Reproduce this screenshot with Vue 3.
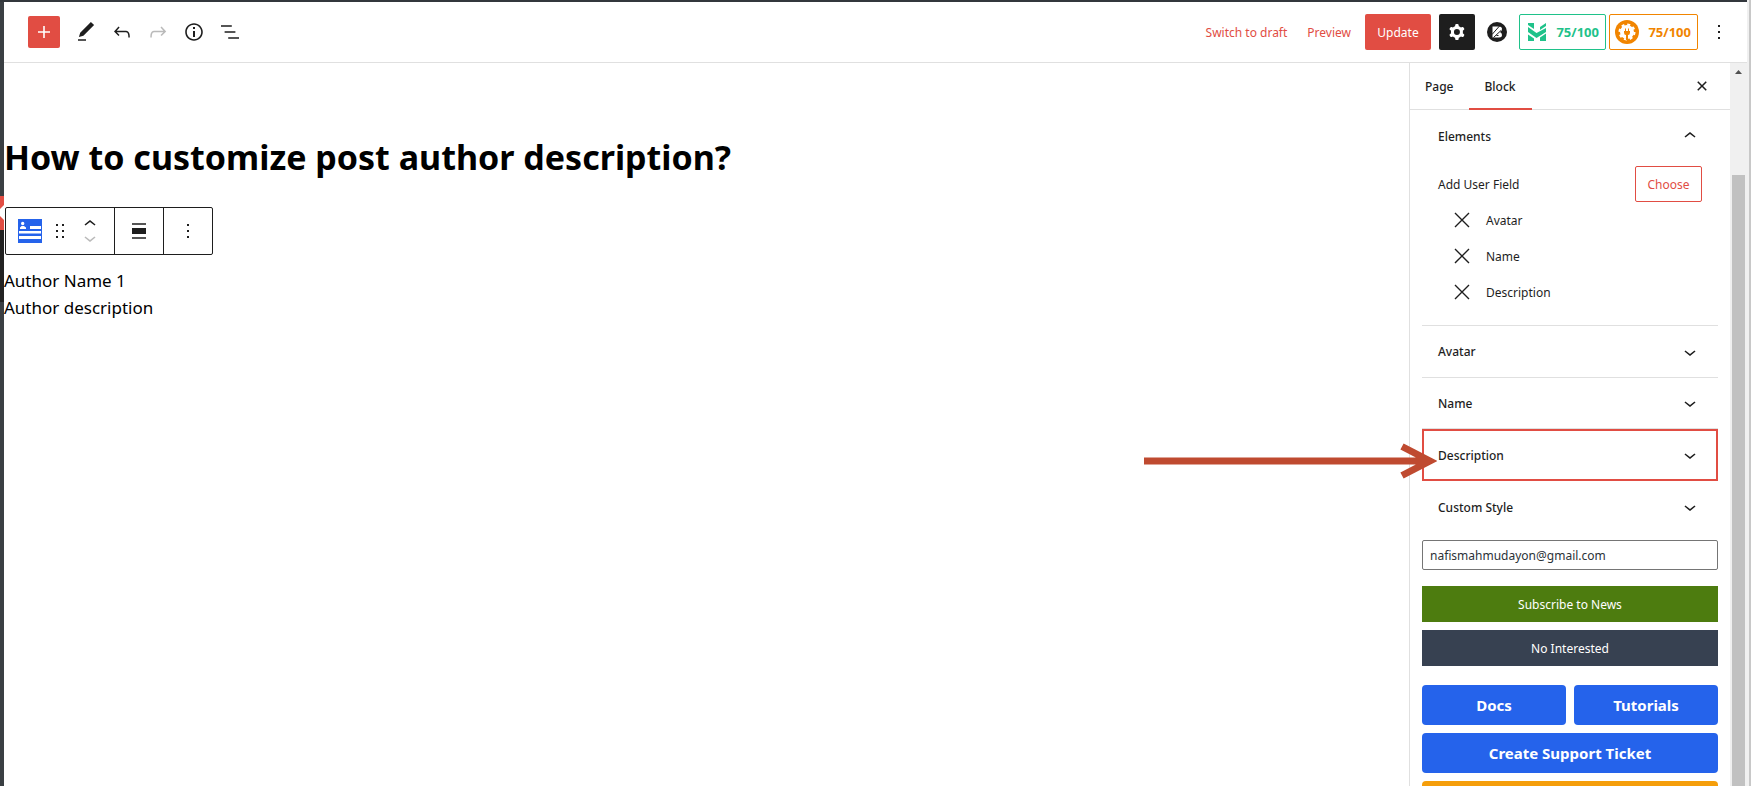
<script setup>
import { ref } from 'vue'

const email = ref('nafismahmudayon@gmail.com')
const fields = ['Avatar', 'Name', 'Description']
const panels = [
  { title: 'Avatar', cls: 'ruled' },
  { title: 'Name', cls: 'ruled closed' },
  { title: 'Description', cls: 'marked' },
  { title: 'Custom Style', cls: '' },
]
</script>

<template>
  <div class="app">
    <div class="top-edge"></div>
    <div class="left-edge">
      <div class="edge-red"><svg viewBox="0 0 4 34" width="4" height="34"><path d="M4 9 0 13v7l4 4z" fill="#fff" /></svg></div>
      <div class="edge-dark"></div>
    </div>

    <header class="header">
      <button class="add" aria-label="Add block"><svg viewBox="0 0 24 24"><path d="M18 11.2h-5.2V6h-1.6v5.2H6v1.6h5.2V18h1.6v-5.2H18z" /></svg></button>
      <div class="tools">
        <button class="icon" aria-label="Edit"><svg viewBox="0 0 24 24"><path d="M20.1 5.1L16.9 2 6.2 12.7l-1.3 4.4 4.5-1.3L20.1 5.1zM4 20.8h8v-1.5H4v1.5z" /></svg></button>
        <button class="icon" aria-label="Undo"><svg viewBox="0 0 24 24"><path d="M18.3 11.7c-.6-.6-1.4-.9-2.3-.9H6.7l2.9-3.3-1.1-1-4.5 5L8.5 16l1-1-2.7-2.7H16c.5 0 .9.2 1.3.5 1 1 1 3.4 1 4.5v.3h1.5v-.2c0-1.5 0-4.3-1.5-5.7z" /></svg></button>
        <button class="icon faded" aria-label="Redo"><svg viewBox="0 0 24 24"><path d="M15.6 6.5l-1.1 1 2.9 3.3H8c-.9 0-1.7.3-2.3.9-1.4 1.5-1.4 4.2-1.4 5.6v.2h1.5v-.3c0-1.1 0-3.5 1-4.5.3-.3.7-.5 1.3-.5h9.2L14.5 15l1.1 1.1 4.6-4.6-4.6-5z" /></svg></button>
        <button class="icon" aria-label="Details"><svg viewBox="0 0 24 24"><path d="M12 3.2c-4.8 0-8.8 3.9-8.8 8.8 0 4.8 3.9 8.8 8.8 8.8 4.8 0 8.8-3.9 8.8-8.8 0-4.8-4-8.8-8.8-8.8zm0 16c-4 0-7.2-3.3-7.2-7.2C4.8 8 8 4.8 12 4.8s7.2 3.3 7.2 7.2c0 4-3.2 7.2-7.2 7.2zM11 17h2v-6h-2v6zm0-8h2V7h-2v2z" /></svg></button>
        <button class="icon" aria-label="List view"><svg viewBox="0 0 24 24"><path d="M13.8 5.2H3v1.5h10.8V5.2zm-3.6 12v1.5H21v-1.5H10.2zm7.2-6H6.6v1.5h10.8v-1.5z" /></svg></button>
      </div>
      <div class="actions">
        <button class="text-btn">Switch to draft</button>
        <button class="text-btn">Preview</button>
        <button class="update">Update</button>
        <button class="settings" aria-label="Settings"><svg viewBox="0 0 24 24"><path fill-rule="evenodd" d="M10.289 4.836A1 1 0 0111.275 4h1.306a1 1 0 01.987.836l.244 1.466c.787.26 1.503.679 2.108 1.218l1.393-.522a1 1 0 011.216.437l.653 1.13a1 1 0 01-.23 1.273l-1.148.944a6.025 6.025 0 010 2.435l1.149.946a1 1 0 01.23 1.272l-.653 1.13a1 1 0 01-1.216.437l-1.394-.522c-.605.54-1.32.958-2.108 1.218l-.244 1.466a1 1 0 01-.987.836h-1.306a1 1 0 01-.986-.836l-.244-1.466a5.995 5.995 0 01-2.108-1.218l-1.394.522a1 1 0 01-1.217-.436l-.653-1.131a1 1 0 01.23-1.272l1.149-.946a6.026 6.026 0 010-2.435l-1.148-.944a1 1 0 01-.23-1.272l.653-1.131a1 1 0 011.217-.437l1.393.522a5.994 5.994 0 012.108-1.218l.244-1.466zM14.929 12a3 3 0 11-6 0 3 3 0 016 0z" /></svg></button>
        <button class="icon brand" aria-label="Block tools"><svg viewBox="0 0 24 24">
          <circle cx="12" cy="12" r="10" />
          <path d="M7.500 6.500h6.500q3 0 3 2.500 0 2-2 3 2 1 2 3 0 2.500-3 2.500H7.500z" fill="#fff" />
          <path d="M7 14.500 14.500 6M8.500 17.500 16 10.500" stroke="#1e1e1e" stroke-width="1" fill="none" />
          <path d="M11.500 15.500h2" stroke="#1e1e1e" stroke-width="1" />
        </svg></button>
        <div class="scores">
          <button class="score green">
            <svg viewBox="0 0 18 18"><path d="M0 0h6v6L0 2zM12 4 18 0v3l-6 4zM0 4l8.500 6L18 5v4l-9.500 6L0 9zM0 11.500l6 4V18H0zM12 14.500l6-4V18h-6z" /></svg>
            75/100
          </button>
          <button class="score orange">
            <svg viewBox="0 0 24 24"><circle cx="12" cy="12" r="12" /><circle cx="12" cy="12" r="7" fill="#fff" /><circle cx="12" cy="12" r="7.500" fill="none" stroke="#fff" stroke-width="2" stroke-dasharray="3 2.890" /><path d="M9 11h6v1.500q0 2.500-2 2.500v5h-2v-5q-2 0-2-2.500zM10 8.500h1V11h-1zM13 8.500h1V11h-1z" /></svg>
            75/100
          </button>
        </div>
        <button class="icon" aria-label="Options"><svg viewBox="0 0 24 24"><path d="M13 19h-2v-2h2v2zm0-6h-2v-2h2v2zm0-6h-2V5h2v2z" /></svg></button>
      </div>
    </header>

    <main class="canvas">
      <h1>How to customize post author description?</h1>
      <div class="toolbar" role="toolbar" aria-label="Block tools">
        <div class="group">
          <button class="icon" aria-label="Author block"><svg viewBox="0 0 24 24"><path fill="#2563eb" d="M0 0h24v24H0z" /><path fill="#fff" d="M3 4.500a1.700 1.700 0 0 1 3.400 0a1.700 1.700 0 0 1-3.400 0zM2 10V8.500L3.500 7H6l2 1.500V10zM12 7h11v3H12zM1 12h22v2.500H1zM1 17h22v3H1z" /></svg></button>
          <button class="icon" aria-label="Drag"><svg viewBox="0 0 24 24"><path d="M8 5h2v2H8zM14 5h2v2h-2zM8 11h2v2H8zM14 11h2v2h-2zM8 17h2v2H8zM14 17h2v2h-2z" /></svg></button>
          <div class="movers">
            <button class="icon" aria-label="Move up"><svg viewBox="0 3 24 16"><path d="M6.500 12.400L12 8l5.500 4.400-.9 1.200L12 10l-4.500 3.600-1-1.200z" /></svg></button>
            <button class="icon faded" aria-label="Move down"><svg viewBox="0 5 24 16"><path d="M17.500 11.600L12 16l-5.500-4.400.9-1.200L12 14l4.500-3.600 1 1.200z" /></svg></button>
          </div>
        </div>
        <div class="group"><button class="icon" aria-label="Align"><svg viewBox="0 0 24 24"><path d="M5 15h14V9H5v6zm0 4.800h14v-1.500H5v1.500zM5 4.200v1.500h14V4.200H5z" /></svg></button></div>
        <div class="group"><button class="icon" aria-label="Options"><svg viewBox="0 0 24 24"><path d="M13 19h-2v-2h2v2zm0-6h-2v-2h2v2zm0-6h-2V5h2v2z" /></svg></button></div>
      </div>
      <p>Author Name 1</p>
      <p>Author description</p>
    </main>

    <aside class="sidebar">
      <nav class="tabs">
        <button>Page</button>
        <button class="active">Block</button>
        <button class="icon close" aria-label="Close"><svg viewBox="0 0 24 24"><path d="M12 13.060l3.712 3.713 1.061-1.060L13.061 12l3.712-3.712-1.060-1.060L12 10.938 8.288 7.227l-1.061 1.060L10.939 12l-3.712 3.712 1.060 1.061L12 13.061z" /></svg></button>
      </nav>
      <div class="side-body">
        <section class="elements">
          <button class="panel-head">Elements<svg viewBox="0 0 24 24"><path d="M6.500 12.400L12 8l5.500 4.400-.9 1.200L12 10l-4.500 3.600-1-1.200z" /></svg></button>
          <div class="add-field"><span>Add User Field</span><button class="choose">Choose</button></div>
          <ul>
            <li v-for="f in fields" :key="f">
              <button class="icon" :aria-label="'Remove ' + f"><svg viewBox="0 0 24 24"><path d="M5 5l14 14M19 5 5 19" stroke="#1e1e1e" stroke-width="1.400" /></svg></button>
              {{ f }}
            </li>
          </ul>
        </section>
        <div v-for="p in panels" :key="p.title" class="panel" :class="p.cls">
          <button class="panel-head">{{ p.title }}<svg viewBox="0 0 24 24"><path d="M17.500 11.600L12 16l-5.500-4.400.9-1.200L12 14l4.500-3.600 1 1.200z" /></svg></button>
          <svg v-if="p.cls === 'marked'" class="arrow" viewBox="0 0 293 36"><path d="M0 18h284M258 3.500 286 18 258 32.500" fill="none" stroke="#bf4a30" stroke-width="7" /></svg>
        </div>
        <input v-model="email" type="email" aria-label="Email address" />
        <button class="flat news">Subscribe to News</button>
        <button class="flat no">No Interested</button>
        <div class="links">
          <a href="#">Docs</a>
          <a href="#">Tutorials</a>
          <a href="#" class="wide">Create Support Ticket</a>
          <a href="#" class="wide amber" aria-label="Review"></a>
        </div>
      </div>
    </aside>

    <div class="scrollbar">
      <svg viewBox="0 0 17 17"><path d="M5 11l3.500-4 3.500 4z" fill="#505050" /></svg>
      <div class="thumb"></div>
    </div>
    <div class="right-edge"></div>
  </div>
</template>

<style>
body {
  overflow: hidden;
}
</style>

<style scoped>
.app {
  display: grid;
  grid-template-columns: 4px minmax(0, 1fr) 321px 17px 4px;
  grid-template-rows: 2px 61px minmax(0, 1fr);
  height: 100vh;
  overflow: hidden;
  background: #fff;
  color: #1e1e1e;
  font-family: "Noto Sans", "Open Sans", sans-serif;
  font-size: 12px;
}
.app * {
  box-sizing: border-box;
}
button {
  border: 0;
  padding: 0;
  background: none;
  color: inherit;
  font: inherit;
  white-space: nowrap;
}
svg {
  display: block;
  fill: #1e1e1e;
}
.top-edge {
  grid-column: 1 / 5;
  background: #32373c;
}
.left-edge {
  grid-area: 2 / 1 / 4 / 2;
  padding-top: 194px;
  background: #3a3f43;
}
.edge-red {
  height: 34px;
  background: #e14d43;
}
.edge-dark {
  height: 72px;
  background: #222;
}
.right-edge {
  grid-area: 1 / 5 / 4 / 6;
  border-left: 2px solid #f0f0f0;
  background: #c8c8c8;
}
.icon {
  width: 24px;
  height: 24px;
}
.icon svg {
  width: 100%;
  height: 100%;
}
.faded {
  opacity: 0.3;
}
.header {
  grid-area: 2 / 2 / 3 / 5;
  display: flex;
  align-items: center;
  gap: 14px;
  padding: 0 16px 0 24px;
  border-bottom: 1px solid #e0e0e0;
}
.add {
  display: grid;
  place-items: center;
  width: 32px;
  height: 32px;
  border-radius: 2px;
  background: #e14d43;
}
.add svg {
  width: 24px;
  fill: #fff;
}
.tools {
  display: flex;
  gap: 12px;
}
.actions {
  display: flex;
  align-items: center;
  gap: 8px;
  margin-left: auto;
}
.text-btn {
  padding: 0 6px;
  color: #e14d43;
}
.update,
.settings {
  height: 36px;
  border-radius: 2px;
}
.update {
  width: 66px;
  background: #e14d43;
  color: #fff;
}
.settings {
  display: grid;
  place-items: center;
  width: 36px;
  background: #1e1e1e;
}
.settings svg {
  width: 24px;
  fill: #fff;
}
.brand {
  margin: 0 2px;
}
.scores {
  display: flex;
  gap: 3px;
  margin-right: 1px;
}
.score {
  display: flex;
  align-items: center;
  justify-content: space-between;
  height: 36px;
  padding: 0 6px;
  border: 1px solid currentColor;
  border-radius: 2px;
  font-size: 13px;
  font-weight: 700;
}
.score svg {
  fill: currentColor;
}
.green {
  width: 87px;
  padding-left: 8px;
  color: #1fc28a;
}
.green svg {
  width: 18px;
}
.orange {
  width: 89px;
  padding-left: 5px;
  color: #f18500;
}
.orange svg {
  width: 24px;
}
.canvas {
  grid-area: 3 / 2;
  padding-top: 70px;
}
h1 {
  margin: 0 0 26px;
  color: #000;
  font-size: 34px;
  line-height: 48px;
  white-space: nowrap;
}
p {
  margin: 0;
  color: #000;
  font-size: 17px;
  line-height: 27px;
}
.toolbar {
  display: flex;
  width: max-content;
  height: 48px;
  margin: 0 0 12px 1px;
  border: 1px solid #1e1e1e;
  border-radius: 2px;
}
.group {
  display: flex;
  align-items: center;
  gap: 6px;
  padding: 0 12px;
}
.group + .group {
  border-left: 1px solid #1e1e1e;
}
.movers {
  display: flex;
  flex-direction: column;
}
.movers .icon {
  height: 16px;
}
.sidebar {
  grid-area: 3 / 3;
  border-left: 1px solid #e0e0e0;
}
.tabs {
  display: flex;
  align-items: stretch;
  height: 47px;
  border-bottom: 1px solid #e0e0e0;
}
.tabs button {
  padding: 0 15px;
  font-weight: 500;
}
.tabs .active {
  height: 47px;
  padding: 0 16px;
  box-shadow: inset 0 -2px #e14d43;
}
.tabs .close {
  align-self: center;
  margin: 0 16px 0 auto;
  padding: 0;
}
.side-body {
  padding: 0 12px;
}
.panel-head {
  display: flex;
  align-items: center;
  justify-content: space-between;
  width: 100%;
  height: 100%;
  padding: 0 16px;
  font-weight: 500;
}
.panel-head svg {
  width: 24px;
  height: 24px;
}
.elements {
  height: 215px;
}
.elements .panel-head {
  height: 52px;
}
.add-field {
  display: flex;
  align-items: center;
  justify-content: space-between;
  height: 36px;
  margin: 4px 16px 0;
}
.choose {
  width: 67px;
  height: 36px;
  border: 1px solid #e14d43;
  border-radius: 2px;
  color: #e14d43;
}
ul {
  margin: 0;
  padding: 0 28px;
  list-style: none;
}
li {
  display: flex;
  align-items: center;
  gap: 12px;
  height: 36px;
}
.panel {
  position: relative;
  height: 52px;
}
.ruled {
  border-top: 1px solid #e0e0e0;
}
.closed {
  border-bottom: 1px solid #e0e0e0;
}
.marked {
  border: 2px solid #e14d43;
}
.marked .panel-head {
  padding: 0 14px;
}
.arrow {
  position: absolute;
  top: 12px;
  left: -280px;
  width: 293px;
  height: 36px;
  pointer-events: none;
}
input {
  display: block;
  width: 100%;
  height: 30px;
  margin: 7px 0 16px;
  padding: 0 7px;
  border: 1px solid #757575;
  border-radius: 2px;
  background: #fff;
  color: #2c3338;
  font: inherit;
}
.flat {
  display: block;
  width: 100%;
  height: 36px;
  color: #fff;
}
.news {
  margin-bottom: 8px;
  background: #4d7c0f;
}
.no {
  margin-bottom: 19px;
  background: #374151;
}
.links {
  display: grid;
  grid-template-columns: 1fr 1fr;
  grid-auto-rows: 40px;
  gap: 8px;
}
.links a {
  display: grid;
  place-items: center;
  border-radius: 4px;
  background: #2563eb;
  color: #fff;
  font-size: 15px;
  font-weight: 700;
  text-decoration: none;
}
.links .wide {
  grid-column: 1 / 3;
}
.links .amber {
  background: #f59e0b;
}
.scrollbar {
  grid-area: 3 / 4;
  display: flex;
  flex-direction: column;
  background: #f0f0f0;
}
.scrollbar svg {
  width: 17px;
  height: 17px;
}
.thumb {
  flex: 1;
  margin: 95px 2px 0;
  background: #c1c1c1;
}
</style>
